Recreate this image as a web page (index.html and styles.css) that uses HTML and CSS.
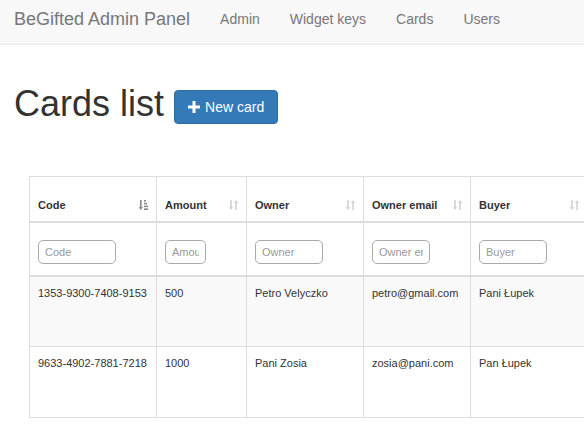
FILE: index.html
```html
<!DOCTYPE html>
<html lang="en">
<head>
    <meta charset="UTF-8">
    <title>BeGifted Admin Panel</title>
    <link rel="stylesheet" href="styles.css">
</head>
<body>
<nav class="navbar">
    <a class="brand" href="#">BeGifted Admin Panel</a>
    <a class="nav-link" href="#">Admin</a>
    <a class="nav-link" href="#">Widget keys</a>
    <a class="nav-link" href="#">Cards</a>
    <a class="nav-link" href="#">Users</a>
</nav>

<div class="container">
    <h1 class="page-title">Cards list
        <button class="btn-new">
            <svg class="plus" width="12" height="12" viewBox="0 0 12 12"><path d="M4.5 0h3v4.5H12v3H7.5V12h-3V7.5H0v-3h4.5z" fill="#fff"/></svg>
            New card
        </button>
    </h1>

    <div class="table-wrap">
        <table class="cards">
            <thead>
                <tr class="head-row">
                    <th class="col-code"><div class="th-inner">Code
                        <svg class="sort active" width="9" height="10" viewBox="0 0 9 10"><path d="M1 0h1.6v7H4L1.8 10 -0.4 7H1z" fill="currentColor"/><rect x="5" y="0" width="2" height="1.6" fill="currentColor"/><rect x="5" y="2.8" width="3" height="1.6" fill="currentColor"/><rect x="5" y="5.6" width="4" height="1.6" fill="currentColor"/><rect x="5" y="8.4" width="4" height="1.6" fill="currentColor"/></svg></div></th>
                    <th class="col-amount"><div class="th-inner">Amount
                        <svg class="sort" width="9" height="10" viewBox="0 0 9 10"><path d="M1.2 0h1.6v7h1.3L2 10 -0.1 7h1.3z M6.2 10h1.6V3h1.3L7 0 4.9 3h1.3z" fill="currentColor"/></svg></div></th>
                    <th class="col-owner"><div class="th-inner">Owner
                        <svg class="sort" width="9" height="10" viewBox="0 0 9 10"><path d="M1.2 0h1.6v7h1.3L2 10 -0.1 7h1.3z M6.2 10h1.6V3h1.3L7 0 4.9 3h1.3z" fill="currentColor"/></svg></div></th>
                    <th class="col-email"><div class="th-inner">Owner email
                        <svg class="sort" width="9" height="10" viewBox="0 0 9 10"><path d="M1.2 0h1.6v7h1.3L2 10 -0.1 7h1.3z M6.2 10h1.6V3h1.3L7 0 4.9 3h1.3z" fill="currentColor"/></svg></div></th>
                    <th class="col-buyer"><div class="th-inner">Buyer
                        <svg class="sort" width="9" height="10" viewBox="0 0 9 10"><path d="M1.2 0h1.6v7h1.3L2 10 -0.1 7h1.3z M6.2 10h1.6V3h1.3L7 0 4.9 3h1.3z" fill="currentColor"/></svg></div></th>
                </tr>
                <tr class="filter-row">
                    <th><input class="filter f-code" type="text" placeholder="Code"></th>
                    <th><input class="filter f-amount" type="text" placeholder="Amount"></th>
                    <th><input class="filter f-owner" type="text" placeholder="Owner"></th>
                    <th><input class="filter f-email" type="text" placeholder="Owner email"></th>
                    <th><input class="filter f-buyer" type="text" placeholder="Buyer"></th>
                </tr>
            </thead>
            <tbody>
                <tr class="odd">
                    <td>1353-9300-7408-9153</td>
                    <td>500</td>
                    <td>Petro Velyczko</td>
                    <td>petro@gmail.com</td>
                    <td>Pani Łupek</td>
                </tr>
                <tr>
                    <td>9633-4902-7881-7218</td>
                    <td>1000</td>
                    <td>Pani Zosia</td>
                    <td>zosia@pani.com</td>
                    <td>Pan Łupek</td>
                </tr>
            </tbody>
        </table>
    </div>
</div>
</body>
</html>
```

FILE: styles.css
```css
html, body {
    overflow: hidden;
}
body {
    margin: 0;
    font-family: "Liberation Sans", Arial, sans-serif;
    font-size: 14px;
    line-height: 1.42857;
    color: #333;
    background-color: #fff;
}
.navbar {
    display: flex;
    height: 44px;
    background-color: #f8f8f8;
    border-bottom: 1px solid #e7e7e7;
}
.navbar a {
    text-decoration: none;
    color: #777;
}
.brand {
    font-size: 18px;
    line-height: 20px;
    padding: 9px 15px 15px 14px;
}
.nav-link {
    line-height: 20px;
    padding: 9px 15px 15px 15px;
}
.container {
    padding: 0 15px 0 14px;
}
.page-title {
    font-size: 36px;
    font-weight: 500;
    line-height: 1.1;
    margin: 39px 0 10px 0;
    color: #333;
    display: flex;
    align-items: flex-start;
    gap: 10px;
}
.btn-new {
    display: inline-flex;
    align-items: center;
    gap: 5px;
    height: 34px;
    padding: 6px 13px;
    font-family: inherit;
    font-size: 14px;
    line-height: 20px;
    color: #fff;
    background-color: #337ab7;
    border: 1px solid #2e6da4;
    border-radius: 4px;
    margin-top: 6px;
}
.table-wrap {
    margin-top: 52px;
    padding-left: 15px;
}
.cards {
    border-collapse: collapse;
    table-layout: fixed;
    width: 558px;
    font-size: 11px;
    line-height: 16px;
}
.cards th, .cards td {
    border: 1px solid #ddd;
    padding: 8px;
    text-align: left;
}
.col-code { width: 110px; }
.col-amount { width: 73px; }
.col-owner { width: 100px; }
.col-email { width: 90px; }
.col-buyer { width: 100px; }
.head-row th {
    height: 28px;
    vertical-align: bottom;
    border-bottom: 2px solid #ddd;
    font-weight: bold;
}
.th-inner {
    display: flex;
    justify-content: space-between;
    align-items: center;
}
.sort {
    color: #d2d2d2;
    margin-bottom: 1px;
}
.sort.active {
    color: #8a8a8a;
}
.filter-row th {
    padding: 17px 8px 11px 8px;
    border-bottom: 2px solid #ddd;
    vertical-align: top;
}
.filter {
    display: block;
    box-sizing: border-box;
    height: 24px;
    padding: 0 6px;
    font-family: inherit;
    font-size: 11px;
    color: #555;
    border: 1px solid #aaa;
    border-radius: 5px;
    background: #fff;
}
.filter::placeholder {
    color: #999;
}
.f-code { width: 78px; }
.f-amount { width: 41px; }
.f-owner { width: 68px; }
.f-email { width: 58px; }
.f-buyer { width: 68px; }
.cards td {
    height: 53px;
    vertical-align: top;
}
.cards tr.odd td {
    background-color: #f9f9f9;
}
.cards tr:last-child td {
    height: 54px;
}
```
